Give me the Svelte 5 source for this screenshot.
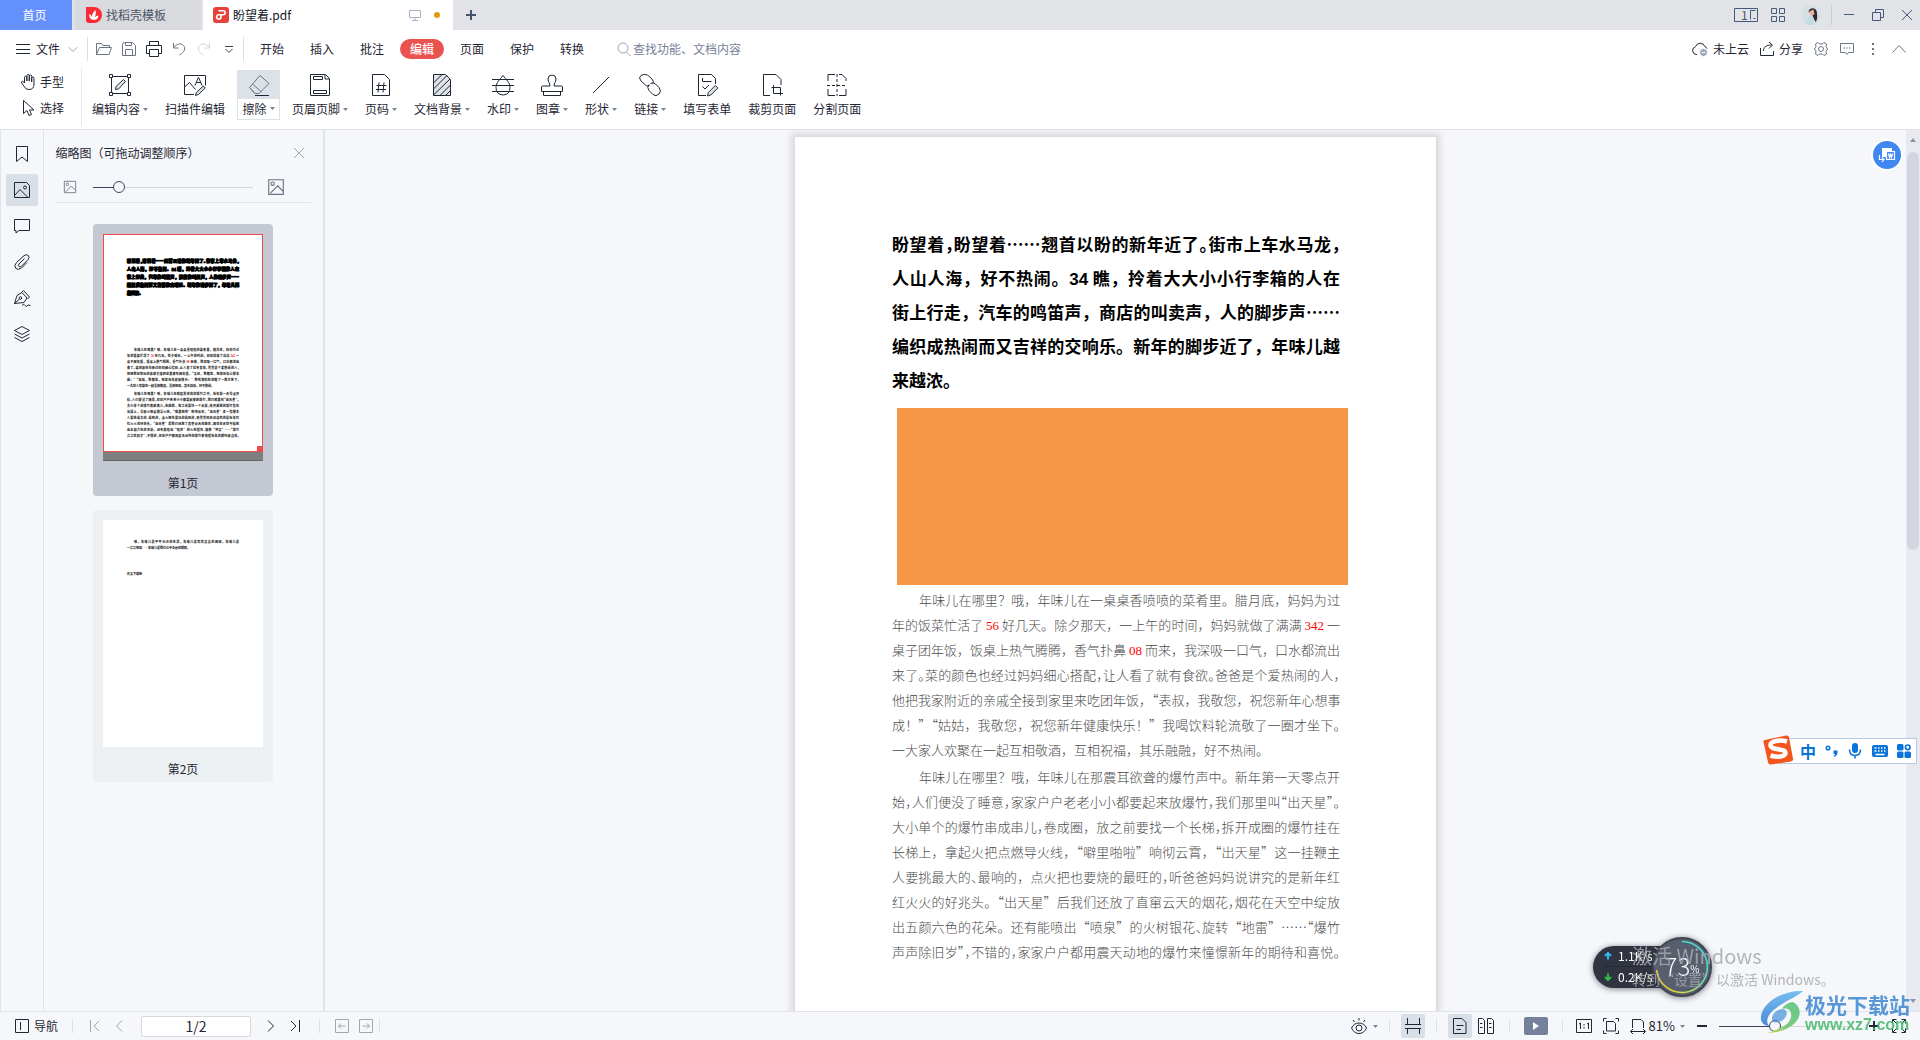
<script>
  const ink = {
    menu: { v: 16, p: [['M1 3.5h14M1 8.5h14M1 12.5h14']] },
    chevron: { v: 12, p: [['M1 4l5 5 5-5']] },
    open: { v: 18, p: [['M1.5 14.5v-11h5l1.5 2h6.5v2M1.5 14.5l3-7h12l-2.500 7z']] },
    save: { v: 16, p: [['M1.500 3.500q0-2 2-2h8l3 3v10h-13zM4.500 1.500v3h6v-3M4.500 14.500v-6h7v6']] },
    print: { v: 18, p: [['M4.5 5.500v-4h9v4M4.500 13.500h-3v-8h15v8h-3M4.500 9.500h9v7h-9z']] },
    undo: { v: 16, p: [['M2.500 2v5h5M3 6.500C5 3 10 1.500 12.500 4.500s1 6.500-4 9.500']] },
    redo: { v: 16, p: [['M13.500 2v5h-5M13 6.500C11 3 6 1.500 3.500 4.500s-1 6.500 4 9.500']] },
    more: { v: 12, p: [['M2 3.500h8'], ['M2.500 6l3.500 3.500L9.500 6']] },
    search: { v: 16, p: [['M12 7a5 5 0 1 1-10 0a5 5 0 0 1 10 0M10.500 11l4 4']] },
    cloud: { v: 18, p: [['M6 14.500H5a4 4 0 0 1-.5-7.800a5 5 0 0 1 9.500 0q1.500.5 2 2'], ['M16.500 12.500a4 4 0 1 1-8 0a4 4 0 0 1 8 0z', 'mist'], ['M10.500 12.500h4', 'light']] },
    share: { v: 16, p: [['M1.500 7v7.500h13V10M4.500 10c0-4 3-6 8-6M10 1l3.500 3-3.500 3.500']] },
    hex: { v: 16, p: [['M5 1.500l1.500 1.500h3L11 1.500l2.500 1.500-.5 2.500L14.500 8 13 10.500l.5 2.500-2.500 1.500L9.500 13h-3L5 14.500 2.500 13l.5-2.500L1.500 8 3 5.500 2.500 3z'], ['M10.500 8a2.500 2.500 0 1 1-5 0a2.500 2.500 0 0 1 5 0z']] },
    chat: { v: 16, p: [['M1.500 2.500h13v9H9.500L8 13.500l-1.500-2h-5z'], ['M4.500 7h1.500M7.200 7h1.500M10 7h1.500']] },
    dots: { v: 16, p: [['M7 2h2v2H7zM7 7h2v2H7zM7 12h2v2H7z', 'solid']] },
    up: { v: 16, p: [['M1.500 11.500l6.500-7 6.500 7']] },
    hand: { v: 18, p: [['M5.500 10V4.500q0-1.300 1.200-1.300t1.200 1.300V8V2.700q0-1.200 1.200-1.200t1.200 1.200V8V3.200q0-1.200 1.200-1.200t1.200 1.200V9V5.200q0-1.200 1.100-1.200t1.200 1.200V11q0 5.500-5 5.500-3.500 0-4.500-2.500L2.600 10q-.5-1.500.8-1.700 1-.2 2.100 1.700z']] },
    arrow: { v: 18, p: [['M4.500 1.500v13l3.500-3 2 5 2.500-1-2-4.500h4.500z']] },
    edit: { v: 24, p: [['M3.500 3.500h17v17h-17z'], ['M1.500 1.500h3v3h-3zM19.500 1.500h3v3h-3zM1.500 19.500h3v3h-3zM19.500 19.500h3v3h-3z', 'paper'], ['M7.500 16.500l.5-3 7.500-7 2 2-7 7.500z', 'shade']] },
    scan: { v: 24, p: [['M11 21.500H1.500v-19h21v10M1.500 14l5-4.500 6 7'], ['M12 12.500l3.300-8h.4l3.300 8M13.200 9.500h4.600'], ['M12.500 22.500l.8-3 7-6.500 2 2-7 6.500z', 'shade']] },
    eraser: { v: 24, p: [['M2.500 14.500L13 2.500l9 8L12 20.500H8zM5.500 11l9 8M8 20.500l-5.500-6'], ['M8 22.500h14', 'dark']] },
    header: { v: 24, p: [['M2.500 1.500h15l4 4v16.500q0 .5-.5.500H3q-.5 0-.5-.5zM17 1.500v4.500h4.500'], ['M5.500 3.500h9v3h-9zM5.500 17.500h13v3h-13z']] },
    number: { v: 24, p: [['M3.500 1.500h12l5 5v16h-17z'], ['M10 9.500l-1 10M15 9.500l-1 10M7.500 12.500h10M7 16.500h10']] },
    backdrop: { v: 24, p: [['M3.500 1.500h12l5 5v16h-17z', 'shade'], ['M3.500 10l8.500-8.500M3.500 16l13.500-13.500M4 21.500L20 6M10 22.500L20.500 12M15.500 22.500l5-5']] },
    water: { v: 24, p: [['M12 2.500c3 4 7 7 7 12q0 7-7 7.500-7-.5-7-7.500c0-5 4-8 7-12z'], ['M1 6.500h22M1 12.500h22M1 18.500h22']] },
    stamp: { v: 24, p: [['M10 13c0-3-2-4-2-7a4 4 0 0 1 8 0c0 3-2 4-2 7h7.500q1 0 1 1v4.500h-21V14q0-1 1-1zM3.500 18.500v4h17v-4']] },
    slash: { v: 24, p: [['M4 20L20 4']] },
    link: { v: 24, p: [['M11.500 12.500l-1 .5Q9 13.500 7.500 12L3 8Q0 4.500 3 2.500t6.500-.5l4.500 4q2 2 1 4.500'], ['M12.500 10.500q3-1.500 5 .5l3.500 3.500q3 3.500 0 6.500t-6 .5l-4-4q-2.500-3 0-6']] },
    form: { v: 24, p: [['M11 22.500H3.500v-21h13l4 4V11M7.500 5v3.500h9M7.500 13.500l2.500 2.500 4-4'], ['M12.500 23l.8-3.500 7-7 2.500 2.500-7 7z', 'shade']] },
    crop: { v: 24, p: [['M10 22.500H3.500v-21h12.500l5 5V12'], ['M11.500 14.500h9v8M13.500 12v8.500H23'] ] },
    split: { v: 24, p: [['M3 8V1.500h7M14 1.500h3l4 4V8M3 16v6.500h7M14 22.500h7V16'], ['M12 1v22M2 12.500h20', 'dash']] },
    bookmark: { v: 18, p: [['M3.500 1.500h11v15L9 12l-5.500 4.500z']] },
    thumbs: { v: 18, p: [['M1.500 1.500h12l3 3v12h-15zM2 14l5-5.500 8 8M13.500 6.500a1.500 1.500 0 1 1-3 0a1.500 1.500 0 0 1 3 0z']] },
    comment: { v: 18, p: [['M1.500 2.500h15v11H6l-3 2.500v-2.500H1.500z']] },
    clip: { v: 18, p: [['M11.500 5.500l-5.500 5.500q-1.200 1.800 0 2.500t2.500-.3l6.500-6.500q2-2.500.3-4.200t-4.300.2L3.500 9.500q-3 3.500-.8 5.800t5.800-.3l5.500-5.500']] },
    pen: { v: 18, p: [['M1.500 14.500L4 6.500l5-3 5 5.500-3 4.500zM8.500 3.500l2-2 6 6.500-2 2M1.500 14.500l5-4.500M8.700 9a1.300 1.300 0 1 1-2.600 0a1.300 1.300 0 0 1 2.600 0z'], ['M9 16.500q2-2.500 3 0t3-.5l2.500.5']] },
    layers: { v: 18, p: [['M9 1.500l7.500 4L9 9.500l-7.500-4zM1.500 9L9 13l7.500-4M1.500 12.500l7.500 4 7.500-4']] },
    close: { v: 12, p: [['M1 1l10 10M11 1L1 11']] },
    picture: { v: 16, p: [['M1.500 1.500h13v13h-13zM3 13.500l6.500-6.500 5 5M6.500 5a1.500 1.500 0 1 1-3 0a1.500 1.500 0 0 1 3 0z']] },
    nav: { v: 16, p: [['M1.500 1.500h13v13h-13zM6.500 4v8']] },
    first: { v: 14, p: [['M2.500 1v12M11 2L6 7l5 5']] },
    prev: { v: 14, p: [['M10 1.500L4.500 7l5.500 5.500']] },
    next: { v: 14, p: [['M4 1.500L9.500 7 4 12.500']] },
    last: { v: 14, p: [['M11.500 1v12M3 2l5 5-5 5']] },
    back: { v: 16, p: [['M1.500 1.500h13v13h-13zM4.500 8h7M7 5.500L4.500 8 7 10.500']] },
    forth: { v: 16, p: [['M1.500 1.500h13v13h-13zM4.500 8h7M9 5.500L11.500 8 9 10.500']] },
    eye: { v: 18, p: [['M1.500 11Q4 6 9 6t7.500 5Q14 16.500 9 16.500T1.500 11zM12 11a3 3 0 1 1-6 0a3 3 0 0 1 6 0zM9 1v2.500M3 3l1.500 2M15 3l-1.500 2']] },
    flow: { v: 18, p: [['M3.500 1v6.500h12V1M3.500 17v-5.500h12V17M1 7.500h16M1 11.500h16']] },
    single: { v: 18, p: [['M2.500 1.500h8.500l4 4v11h-12.500zM5.500 8.500h7M5.500 12.500h4.500']] },
    double: { v: 18, p: [['M1.500 1.500h4l2 2v13h-6zM10.500 1.500h4l2 2v13h-6zM3 6.500h2.500M3 10.500h2.500M12 6.500h2.500M12 10.500h2.500']] },
    actual: { v: 16, p: [['M.5 1.500h15v13H.5zM3 6l1.500-1v6M11 6l1.500-1v6M8 6v1.500M8 9v1.500']] },
    fit: { v: 16, p: [['M3.500 3.500h7l2 2v7.500h-9zM.5 3.500v-3h3M12.500.5h3v3M.5 12.500v3h3M12.500 15.500h3v-3']] },
    wide: { v: 16, p: [['M2.500 10V1.500h8.500l2.500 2.500v6M.5 13.500h15M3 11L.5 13.500 3 16M13 11l2.500 2.500L13 16']] },
    full: { v: 16, p: [['M1.500 5.500v-4h4M10.500 1.500h4v4M1.500 10.500v4h4M10.500 14.500h4v-4M2 2l4 4M14 2l-4 4M2 14l4-4M14 14l-4-4']] },
    minus: { v: 12, p: [['M1 6h10', 'thick']] },
    plus: { v: 12, p: [['M1 6h10M6 1v10', 'thick']] },
    dash: { v: 12, p: [['M1 5.500h10']] },
    restore: { v: 14, p: [['M1.500 4.500h8v8h-8zM4.500 4.500v-3h8v8h-3']] },
    tiles: { v: 16, p: [['M1.500 1.500h5v5h-5zM9.500 1.500h5v5h-5zM1.500 9.500h5v5h-5zM9.500 9.500h5v5h-5z']] },
    screen: { v: 14, p: [['M1.500 2.500h11v7h-11zM7 9.500v3M4 12.500h6']] }
  };

  const quick = [['open', '打开'], ['save', '保存'], ['print', '打印'], ['undo', '撤销'], ['redo', '恢复'], ['more', '更多']];
  const menus = ['开始', '插入', '批注', '编辑', '页面', '保护', '转换'];
  const tools = [
    ['edit', '编辑内容', true], ['scan', '扫描件编辑', false], ['eraser', '擦除', true], ['header', '页眉页脚', true],
    ['number', '页码', true], ['backdrop', '文档背景', true], ['water', '水印', true], ['stamp', '图章', true],
    ['slash', '形状', true], ['link', '链接', true], ['form', '填写表单', false], ['crop', '裁剪页面', false], ['split', '分割页面', false]
  ];
  const rail = [['bookmark', '书签'], ['thumbs', '缩略图'], ['comment', '批注'], ['clip', '附件'], ['pen', '签名'], ['layers', '图层']];

  // In document lines, "~" after a mark sets it half width, [n] is a highlighted number
  // and {n} a plain number in the heading face.
  const lead = [
    '盼望着，~盼望着……翘首以盼的新年近了。~街市上车水马龙，~',
    '人山人海，好不热闹。{34} 瞧，拎着大大小小行李箱的人在',
    '街上行走，汽车的鸣笛声，商店的叫卖声，人的脚步声……',
    '编织成热闹而又吉祥的交响乐。新年的脚步近了，年味儿越',
    '来越浓。'
  ];
  const body = [
    [
      '年味儿在哪里？哦，年味儿在一桌桌香喷喷的菜肴里。腊月底，妈妈为过',
      '年的饭菜忙活了 [56] 好几天。除夕那天，一上午的时间，妈妈就做了满满 [342] 一',
      '桌子团年饭，饭桌上热气腾腾，香气扑鼻 [08] 而来，我深吸一口气，口水都流出',
      '来了。~菜的颜色也经过妈妈细心搭配，~让人看了就有食欲。~爸爸是个爱热闹的人，~',
      '他把我家附近的亲戚全接到家里来吃团年饭，“~表叔，我敬您，祝您新年心想事',
      '成！”“~姑姑，我敬您，祝您新年健康快乐！”我喝饮料轮流敬了一圈才坐下。~',
      '一大家人欢聚在一起互相敬酒，互相祝福，其乐融融，好不热闹。'
    ],
    [
      '年味儿在哪里？哦，年味儿在那震耳欲聋的爆竹声中。新年第一天零点开',
      '始，~人们便没了睡意，~家家户户老老小小都要起来放爆竹，~我们那里叫“~出天星”~。~',
      '大小单个的爆竹串成串儿，~卷成圈，放之前要找一个长梯，~拆开成圈的爆竹挂在',
      '长梯上，拿起火把点燃导火线，“~噼里啪啦”响彻云霄，“~出天星”这一挂鞭主',
      '人要挑最大的、~最响的，点火把也要烧的最旺的，~听爸爸妈妈说讲究的是新年红',
      '红火火的好兆头。“~出天星”后我们还放了直窜云天的烟花，~烟花在天空中绽放',
      '出五颜六色的花朵。还有能喷出“喷泉”的火树银花、~旋转“地雷”……“~爆竹',
      '声声除旧岁”~，~不错的，~家家户户都用震天动地的爆竹来憧憬新年的期待和喜悦。~'
    ]
  ];
  const tail = ['哦，年味儿是平平淡淡的生活，年味儿是欢欢喜喜的团圆，年味儿是', '一声声祝福——年味儿是我们心中永远的期盼。'];

  const split = (line) => line.split(/(\[\d+\]|\{\d+\}|[，。、“”]~)/).filter(Boolean);

  let activeMenu = $state('编辑');
  let activeRail = $state('缩略图');
  let thumbSize = $state(14);
  let zoom = $state(41);
</script>

{#snippet icon(name, size)}
  <svg class="ic" width={size ?? ink[name].v} height={size ?? ink[name].v} viewBox="0 0 {ink[name].v} {ink[name].v}" aria-hidden="true">
    {#each ink[name].p as [d, kind]}<path {d} class={kind} />{/each}
  </svg>
{/snippet}

{#snippet caret()}
  <svg class="caret" width="5" height="3" viewBox="0 0 5 3" aria-hidden="true"><path d="M0 0h5L2.500 3z" /></svg>
{/snippet}

{#snippet textline(line)}
  <span class="row">{#each split(line) as s}{#if s[0] === '['}<span class="num red">{s.slice(1, -1)}</span>{:else if s[0] === '{'}<span class="sans">{s.slice(1, -1)}</span>{:else if s.endsWith('~')}<span class="half">{s[0]}</span>{:else}{s}{/if}{/each}</span>
{/snippet}

{#snippet article()}
  <p class="lead">{#each lead as l}{@render textline(l)}{/each}</p>
  <div class="block"></div>
  {#each body as para}
    <p class="para">{#each para as l}{@render textline(l)}{/each}</p>
  {/each}
{/snippet}

{#snippet miniature()}
  <span class="lead">{#each lead as l}{@render textline(l)}{/each}</span>
  {#each body as para}
    <span class="para">{#each para as l}{@render textline(l)}{/each}</span>
  {/each}
{/snippet}

<div class="app" lang="zh-CN">
  <header class="tabs">
    <button class="home">首页</button>
    <button class="tab">
      <svg width="16" height="16" viewBox="0 0 16 16" aria-hidden="true"><path d="M0 0h8a8 8 0 0 1 0 16H3a3 3 0 0 1-3-3z" fill="#fb2b36" /><path d="M7 13C5 10 6 6 9.500 3c.8 4 0 7-2.500 10zM6.500 13C4 12 3 10 3.200 7c2.300 1 3.300 3 3.300 6zM7.500 13c.5-2.500 2-4 5-4.500-.3 3-2 4.500-5 4.500z" fill="#fff" /></svg>
      找稻壳模板
    </button>
    <button class="tab current">
      <svg width="16" height="16" viewBox="0 0 16 16" aria-hidden="true"><rect width="16" height="16" rx="3" fill="#e8403a" /><path d="M5.500 3.800h4.700a1.900 1.900 0 0 1 0 3.900H5.800a2.200 2.200 0 1 0 2.200 2.300V7.700" fill="none" stroke="#fff" stroke-width="1.600" /></svg>
      <span class="grow">盼望着.pdf</span>
      <span class="pale">{@render icon('screen')}</span>
      <i class="unsaved"></i>
    </button>
    <button class="add" aria-label="新建标签">{@render icon('plus')}</button>
    <div class="window">
      <button class="pages" aria-label="窗口"><svg width="24" height="14" viewBox="0 0 24 14" aria-hidden="true"><path d="M.5.5h23v13H.5zM16.500 2.500v9M16.500 2.500h5M19.500 10.500h2" /></svg><span>1</span></button>
      <button aria-label="应用">{@render icon('tiles')}</button>
      <button aria-label="账号">
        <svg width="20" height="20" viewBox="0 0 20 20" aria-hidden="true"><circle cx="10" cy="10" r="10" fill="#d3e1e5" /><path d="M7.500 6.500c1.500-5 8.500-4 8.500 1.500 0 3 1 6-1.500 9l-3-6z" fill="#34262b" /><path d="M8 6.500l4.500-2 1 4.500-3 2.500z" fill="#e3b4a3" /><path d="M4.500 19l3.500-8 4 .5 1 8q-4 1-8.500-.5z" fill="#c3dbe4" /></svg>
      </button>
      <i class="sep"></i>
      <button aria-label="最小化">{@render icon('dash')}</button>
      <button aria-label="还原">{@render icon('restore')}</button>
      <button aria-label="关闭">{@render icon('close')}</button>
    </div>
  </header>

  <nav class="menubar">
    <button class="file">{@render icon('menu')}<span>文件</span><span class="tick">{@render icon('chevron', 10)}</span></button>
    <div class="quick">
      {#each quick as [name, label]}<button class={name} aria-label={label}>{@render icon(name)}</button>{/each}
    </div>
    <div class="menus">
      {#each menus as m}<button class:on={m === activeMenu} onclick={() => (activeMenu = m)}>{m}</button>{/each}
    </div>
    <label class="search">{@render icon('search')}<input type="text" placeholder="查找功能、文档内容" aria-label="查找功能" /></label>
    <div class="account">
      <button>{@render icon('cloud')}未上云</button>
      <button>{@render icon('share')}分享</button>
      <button class="grey" aria-label="设置">{@render icon('hex')}</button>
      <button class="grey" aria-label="反馈">{@render icon('chat')}</button>
      <button class="grey" aria-label="更多">{@render icon('dots')}</button>
      <button class="grey" aria-label="收起">{@render icon('up')}</button>
    </div>
  </nav>

  <div class="ribbon">
    <div class="modes">
      <button>{@render icon('hand')}手型</button>
      <button>{@render icon('arrow')}选择</button>
    </div>
    {#each tools as [name, label, drop]}
      <button class="tool {name}">
        <span class="glyph">{@render icon(name)}</span>
        <span class="label">{label}{#if drop}{@render caret()}{/if}</span>
      </button>
    {/each}
  </div>

  <main>
    <aside class="rail">
      {#each rail as [name, label]}
        <button class:on={label === activeRail} aria-label={label} onclick={() => (activeRail = label)}>{@render icon(name)}</button>
      {/each}
    </aside>

    <section class="panel">
      <div class="title"><span>缩略图（可拖动调整顺序）</span><button aria-label="关闭面板">{@render icon('close')}</button></div>
      <div class="size">
        {@render icon('picture', 14)}
        <input type="range" aria-label="缩略图大小" bind:value={thumbSize} style="--fill:{thumbSize + 2}%" />
        {@render icon('picture', 18)}
      </div>
      <button class="thumb on">
        <span class="sheet mini">
          <span class="scroll">{@render miniature()}</span>
        </span>
        <span>第1页</span>
      </button>
      <button class="thumb">
        <span class="sheet mini second">
          <span class="para">{#each tail as l}{@render textline(l)}{/each}</span>
          <b>作文下载网</b>
        </span>
        <span>第2页</span>
      </button>
    </section>

    <section class="viewer">
      <article class="page">{@render article()}</article>
      <button class="convert" aria-label="转换为文档">
        <svg width="18" height="16" viewBox="0 0 18 16" aria-hidden="true"><path d="M4 1h10v3H8v6H4z" fill="#fff" /><path d="M8.500 4.500h8v8h-8zM10.500 6.500l1 4 1-3 1 3 1-4M1.500 8v4.500h4M4 10l2 2.500L4 15" fill="none" stroke="#fff" stroke-width="1.200" /></svg>
      </button>
    </section>
    <div class="scrollbar"><svg width="6" height="4" viewBox="0 0 6 4" aria-hidden="true"><path d="M3 0l3 4H0z" /></svg><i></i><svg class="down" width="6" height="4" viewBox="0 0 6 4" aria-hidden="true"><path d="M0 0h6L3 4z" /></svg></div>
  </main>

  <footer>
    <button class="navi">{@render icon('nav')}导航</button>
    <i class="sep"></i>
    <div class="pager">
      <button class="off" aria-label="首页">{@render icon('first')}</button>
      <button class="off" aria-label="上一页">{@render icon('prev')}</button>
      <input type="text" aria-label="页码" value="1/2" />
      <button aria-label="下一页">{@render icon('next')}</button>
      <button aria-label="末页">{@render icon('last')}</button>
    </div>
    <i class="sep"></i>
    <div class="history">
      <button class="off" aria-label="后退">{@render icon('back')}</button>
      <button class="off" aria-label="前进">{@render icon('forth')}</button>
    </div>
    <i class="sep"></i>
    <div class="views">
      <button class="eye" aria-label="护眼">{@render icon('eye')}{@render caret()}</button>
      <i class="sep"></i>
      <button class="on" aria-label="连续">{@render icon('flow')}</button>
      <i class="sep"></i>
      <span class="pair">
        <button class="on" aria-label="单页">{@render icon('single')}</button>
        <button aria-label="双页">{@render icon('double')}</button>
      </span>
      <i class="sep"></i>
      <button class="play" aria-label="播放"><svg width="8" height="10" viewBox="0 0 8 10" aria-hidden="true"><path d="M1 1l6 4-6 4z" fill="#fff" /></svg></button>
      <i class="sep"></i>
    </div>
    <div class="zoom">
      <button aria-label="实际大小">{@render icon('actual')}</button>
      <button aria-label="适合页面">{@render icon('fit')}</button>
      <button aria-label="适合宽度">{@render icon('wide')}</button>
      <button class="ratio">81%{@render caret()}</button>
      <button aria-label="缩小">{@render icon('minus')}</button>
      <input type="range" aria-label="缩放" bind:value={zoom} style="--fill:{zoom}%" />
      <button aria-label="放大">{@render icon('plus')}</button>
      <button aria-label="全屏">{@render icon('full')}</button>
    </div>
  </footer>

  <div class="ime">
    <svg class="sogou" width="32" height="32" viewBox="0 0 32 32" aria-hidden="true"><path d="M3 6Q1 6 1.500 8L6 28q.5 3 3 2.500l20-3q2.500-.5 2-3L27 3.500Q26.500 1 24 1.500z" fill="#f4551c" /><path d="M25 7.500C18 5.500 8 7 8.500 11.500c.5 5 15 2.500 15 7.500 0 4-9 4.500-15 2.500" fill="none" stroke="#fff" stroke-width="4.500" /></svg>
    <button>中</button>
    <button aria-label="标点"><svg width="14" height="14" viewBox="0 0 14 14" aria-hidden="true"><circle cx="3" cy="4" r="1.800" fill="none" stroke="#0a74d8" stroke-width="1.500" /><path d="M8.500 6.500h4c.5 3-.5 5-3 6.500l-.7-1q1.200-1 1.200-2H8.500z" /></svg></button>
    <button aria-label="语音"><svg width="14" height="16" viewBox="0 0 14 16" aria-hidden="true"><rect x="4" width="6" height="10" rx="3" /><path d="M1.500 6.500q0 6 5.500 6t5.500-6M7 12v3.500" fill="none" stroke="#0a74d8" stroke-width="1.600" /></svg></button>
    <button aria-label="键盘"><svg width="16" height="14" viewBox="0 0 16 14" aria-hidden="true"><rect y="1" width="16" height="12" rx="2" /><path d="M2.500 4h2M6 4h1.500M9 4h1.500M12 4h1.500M2.500 7h2M6 7h1.500M9 7h1.500M12 7h1.500M3.500 10.500h9" stroke="#fff" stroke-width="1.600" /></svg></button>
    <button aria-label="工具箱"><svg width="14" height="14" viewBox="0 0 14 14" aria-hidden="true"><rect y="0" width="6.500" height="6.500" rx="1.500" /><rect x="0" y="7.500" width="6.500" height="6.500" rx="1.500" /><rect x="7.500" y="7.500" width="6.500" height="6.500" rx="1.500" /><circle cx="10.700" cy="3.300" r="2.300" fill="none" stroke="#0a74d8" stroke-width="1.700" /></svg></button>
  </div>

  <div class="meter">
    <div class="rates">
      <span><svg width="8" height="8" viewBox="0 0 8 8" aria-hidden="true"><path d="M4 7.500V1M1 4l3-3 3 3" stroke="#35b4f0" /></svg>1.1K/s</span>
      <span><svg width="8" height="8" viewBox="0 0 8 8" aria-hidden="true"><path d="M4 .5V7M1 4l3 3 3-3" stroke="#2fbf3f" /></svg>0.2K/s</span>
    </div>
    <div class="dial">
      <svg width="60" height="60" viewBox="0 0 60 60" aria-hidden="true">
        <defs><linearGradient id="arc" x1="1" y1="0" x2="0" y2="1"><stop offset="0" stop-color="#35d3f0" /><stop offset=".45" stop-color="#6fe0a0" /><stop offset=".75" stop-color="#d8dc4a" /><stop offset="1" stop-color="#f5a93a" /></linearGradient></defs>
        <circle cx="30" cy="30" r="29" fill="#575e6e" stroke="#3f4553" stroke-width="2" />
        <path d="M30 4.500A25.500 25.500 0 1 1 4.600 33" fill="none" stroke="url(#arc)" stroke-width="1.600" />
      </svg>
      <span><b>73</b>%</span>
    </div>
  </div>

  <div class="activate"><strong>激活 Windows</strong><span>转到“设置”以激活 Windows。</span></div>

  <a class="site" href="#top">
    <svg width="46" height="44" viewBox="0 0 46 44" aria-hidden="true">
      <defs><linearGradient id="wing" x1="0" y1="0" x2="0" y2="1"><stop offset="0" stop-color="#5fb4f0" /><stop offset="1" stop-color="#2b78cf" /></linearGradient><linearGradient id="leaf" x1="1" y1="0" x2="0" y2="1"><stop offset="0" stop-color="#4cc07c" /><stop offset=".6" stop-color="#68c46a" /><stop offset="1" stop-color="#e6e04a" /></linearGradient></defs>
      <path d="M44 1C24 0 4 12 2 26c-1 6 3 10 8 10-4-5-1-12 6-17C24 12 36 8 44 1z" fill="url(#wing)" />
      <path d="M34 12c8 4 9 14 2 21-7 7-18 10-28 10 10-3 20-7 23-13 3-7 0-13-8-11 2-4 7-7 11-7z" fill="url(#leaf)" />
      <path d="M14 32c-3-5 1-12 9-13 6 0 6 6 2 10-3 3-7 4-11 3z" fill="#3f8fd8" opacity=".8" />
    </svg>
    <span class="names"><strong>极光下载站</strong><em>www.xz7.com</em></span>
  </a>
</div>

<style>
  :global(body) { margin: 0; }
  .app { height: 100vh; display: flex; flex-direction: column; position: relative; overflow: hidden; background: #f6f7fa; color: #1f2735; font: 12px/18px "Noto Sans CJK SC", "Noto Sans", sans-serif; }
  .app *, .app *::before { box-sizing: border-box; }
  button { font: inherit; color: inherit; background: none; border: 0; padding: 0; display: flex; align-items: center; justify-content: center; white-space: nowrap; }
  input { font: inherit; color: inherit; }
  svg { flex: none; display: block; }
  .ic path { fill: none; stroke: currentColor; stroke-width: 1; }
  .ic path.solid { fill: currentColor; stroke: none; }
  .ic path.paper { fill: #fff; }
  .ic path.shade { fill: #dfe3e8; }
  .ic path.thick { stroke-width: 2; }
  .ic path.dark { stroke: #1f2735; }
  .ic path.dash { stroke-dasharray: 3 2; }
  .ic path.mist { fill: #9aa5b9; stroke: #fff; }
  .ic path.light { stroke: #fff; }
  .caret path { fill: #76829b; }
  .sep { width: 1px; background: #dcdfe5; flex: none; }
  .pale { color: #a9b2c4; }
  .grow { flex: 1; text-align: left; }

  .tabs { display: flex; height: 30px; flex: none; background: #e2e3e7; }
  .home { width: 72px; background: #6490fc; color: #fff; margin-right: 3px; padding-right: 3px; }
  .tab { width: 126px; margin-right: 2px; background: #d9dade; color: #4b5568; justify-content: flex-start; gap: 4px; padding-left: 11px; }
  .tab.current { width: 250px; background: #fff; color: #10151f; margin: 0; padding: 0 13px 0 10px; }
  .unsaved { width: 6px; height: 6px; border-radius: 50%; background: #e39a0b; margin-left: 8px; }
  .add { width: 36px; color: #46536c; }
  .window { margin-left: auto; display: flex; align-items: center; gap: 15px; padding-right: 6px; color: #46587c; }
  .window .sep { height: 20px; background: #c8ccd4; margin: 0 -5px; }
  .window button { min-width: 14px; }
  .window button:first-child { margin-right: -3px; }
  .pages { position: relative; }
  .pages path { fill: none; stroke: currentColor; }
  .pages span { position: absolute; left: 7px; }

  .menubar { display: flex; align-items: center; height: 38px; flex: none; background: #fff; }
  .file { padding: 0 9px 0 15px; height: 24px; border-right: 1px solid #dcdfe5; gap: 5px; }
  .tick { color: #8c94a3; margin-left: 3px; }
  .quick { display: flex; align-items: center; gap: 7px; height: 24px; padding: 0 5px 0 7px; border-right: 1px solid #dcdfe5; color: #6b7385; }
  .quick button { width: 18px; }
  .quick .print { color: #1f2735; }
  .quick .redo { color: #cfd3da; }
  .quick .more { color: #3b4557; }
  .menus { display: flex; gap: 6px; padding-left: 6px; }
  .menus button { width: 44px; height: 20px; border-radius: 10px; }
  .menus .on { background: #eb5350; color: #fff; font-weight: 500; }
  .search { display: flex; align-items: center; gap: 1px; margin-left: 22px; color: #9aa3b8; }
  .search input { width: 160px; border: 0; padding: 0; outline: 0; background: none; }
  .search input::placeholder { color: #77819a; opacity: 1; }
  .account { display: flex; align-items: center; gap: 10px; margin-left: auto; padding-right: 13px; }
  .account button { gap: 4px; }
  .account .grey { color: #6d7587; }

  .ribbon { display: flex; gap: 7px; align-items: flex-start; height: 62px; flex: none; background: #fff; border-bottom: 1px solid #dfe1e6; }
  .modes { height: 58px; width: 82px; padding: 1px 0 0 19px; margin-right: -2px; border-right: 1px solid #e6e8ec; display: flex; flex-direction: column; }
  .modes button { justify-content: flex-start; gap: 3px; height: 26px; }
  .tool { flex-direction: column; margin-top: 2px; height: 50px; padding: 0 5px; }
  .glyph { height: 29px; display: flex; align-items: center; }
  .label { height: 20px; display: flex; align-items: center; gap: 3px; padding-bottom: 1px; }
  .eraser { width: 43px; background: #dde2e8; padding: 0 1px 1px; color: #6d7587; }
  .eraser .label { width: 100%; background: #fff; color: #1f2735; justify-content: center; }

  main { flex: 1; min-height: 0; display: flex; }
  .rail { width: 44px; flex: none; border: solid #e1e3ea; border-width: 0 1px; padding: 8px 5px 0; display: flex; flex-direction: column; gap: 4px; }
  .rail button { width: 32px; height: 32px; border-radius: 2px; flex: none; }
  .rail .on { background: #d9dfe7; }
  .panel { width: 281px; flex: none; border-right: 2px solid #e1e3ea; padding-right: 1px; display: flex; flex-direction: column; align-items: center; overflow: hidden; }
  .title { width: 255px; height: 45px; flex: none; display: flex; align-items: center; justify-content: space-between; padding-right: 6px; }
  .title button { color: #a2a7b1; }
  .size { width: 255px; height: 28px; flex: none; display: flex; align-items: center; padding: 0 26px 3px 7px; color: #6b7385; border-bottom: 1px solid #e0e3e8; }
  .size input { flex: 1; min-width: 0; margin: 0 14px 0 16px; }
  input[type="range"] { appearance: none; height: 12px; background: linear-gradient(90deg, #3a455c var(--fill), #d3d7dd var(--fill)) center / 100% 1px no-repeat; }
  input[type="range"]::-webkit-slider-thumb { appearance: none; width: 12px; height: 12px; border-radius: 50%; border: 1px solid #3a455c; background: #f6f7fa; }
  .thumb { width: 180px; height: 272px; flex: none; margin-top: 14px; border-radius: 4px; background: #edf0f3; padding: 10px 10px 0; flex-direction: column; justify-content: flex-start; gap: 13px; }
  .size + .thumb { margin-top: 21px; }
  .thumb.on { background: #c4c8d3; }
  .sheet { width: 160px; height: 227px; background: #fff; display: block; }
  .thumb.on .sheet { background: #7f7f7f; border-bottom: 1px solid #666; }
  .scroll { display: block; height: 218px; background: linear-gradient(#ef4b4b, #ef4b4b) right bottom / 5px 5px no-repeat #fff; border: 1px solid #ef4b4b; padding: 22px 23px 0; }
  .mini .row { line-height: 6px; font-size: 3px; font-weight: 900; color: #333; }
  .mini .lead { display: flex; flex-direction: column; }
  .mini .lead .row { font-size: 4px; line-height: 8px; color: #000; -webkit-text-stroke: 1px #000; }
  .mini .para { display: block; }
  .mini .lead + .para { margin-top: 50px; }
  .mini .para + .para { margin-top: 2px; }
  .mini .para .row:first-child { padding-left: 7px; }
  .mini.second { padding: 19px 24px; text-align: left; }
  .mini b { display: block; font-size: 3px; line-height: 6px; margin-top: 20px; color: #000; }

  .viewer { flex: 1; min-width: 0; position: relative; overflow: hidden; display: flex; justify-content: center; align-items: flex-start; padding-top: 7px; }
  .page { width: 641px; height: 907px; flex: none; background: #fff; padding: 90px 96px 0 97px; box-shadow: 0 0 6px 4px #d9dadc; }
  p { margin: 0; }
  .row { display: block; white-space: nowrap; text-align: justify; text-align-last: justify; text-spacing-trim: space-all; }
  .lead .row:nth-child(5), .para .row:nth-child(7):last-child, .second .row:last-child { text-align-last: left; }
  .half { font-feature-settings: "halt"; }
  .num { font-family: "Liberation Serif", serif; line-height: 1; }
  .sans { font-family: "Liberation Sans", sans-serif; line-height: 1; }
  .red { color: #f00; }
  .page .lead { font-size: 17px; line-height: 34px; font-weight: 700; color: #000; }
  .block { height: 177px; margin: 11px -8px 2px 5px; background: #f79646; }
  .page .para { font-size: 13px; line-height: 25px; color: #4c4c4c; margin-bottom: 2px; font-weight: 300; }
  .page .para .row:first-child { padding-left: 27px; }
  .convert { position: absolute; right: 3px; top: 9px; width: 32px; height: 32px; border-radius: 50%; background: #4187f2; border: 2px solid #fff; }
  .scrollbar { width: 14px; flex: none; background: #e9eaef; display: flex; flex-direction: column; align-items: center; gap: 10px; padding: 8px 1px; }
  .scrollbar path { fill: #8b93a8; }
  .scrollbar i { width: 12px; height: 46%; border-radius: 6px; background: #d2d6e0; }
  .down { margin-top: auto; }

  footer { height: 29px; flex: none; display: flex; align-items: center; border-top: 1px solid #e1e3e8; background: #f6f7fa; }
  footer .sep { height: 14px; }
  .navi { padding: 0 14px; gap: 4px; }
  .pager { display: flex; align-items: center; padding: 0 17px 0 15px; gap: 10px; }
  .pager input { width: 110px; height: 21px; margin: 0 3px 0 5px; border: 1px solid #d6d8dc; border-radius: 2px; background: #fff; text-align: center; font-size: 14px; padding: 0; }
  .off { color: #a4a6ab; }
  .history { display: flex; gap: 8px; padding: 0 5px 0 14px; }
  .views { margin-left: auto; display: flex; align-items: center; gap: 11px; }
  .views button { width: 24px; height: 24px; border-radius: 2px; }
  .views .on { background: #d9dfe7; }
  .views .eye { width: auto; gap: 5px; }
  .pair { display: flex; gap: 2px; }
  .views .play { background: #75809b; height: 18px; margin: 0 3px; }
  .zoom { display: flex; align-items: center; gap: 11px; padding: 0 13px; }
  .zoom .ratio { gap: 5px; margin-left: -8px; font-size: 13px; }
  .zoom input { width: 134px; margin: 0 4px 0 0; }

  .ime { position: absolute; right: 3px; bottom: 276px; width: 138px; height: 26px; background: #fff; border: 1px solid #b5cbe8; display: flex; align-items: center; justify-content: space-between; padding: 0 5px 0 20px; color: #0a74d8; font-size: 16px; font-weight: 700; }
  .ime button path, .ime button rect { fill: #0a74d8; }
  .ime .sogou { position: absolute; left: -18px; top: -5px; }
  .ime button svg path[fill="none"] { fill: none; }

  .meter { position: absolute; right: 208px; bottom: 43px; display: flex; align-items: center; color: #fff; filter: drop-shadow(0 1px 3px #777b86); }
  .rates { width: 90px; height: 42px; border-radius: 21px 0 0 21px; background: #2f3440; margin-right: -31px; padding-left: 11px; }
  .rates span { display: flex; align-items: center; gap: 6px; height: 20px; font-size: 12px; }
  .rates span + span { border-top: 1px solid #262a34; height: 21px; }
  .rates path { fill: none; stroke-width: 2; }
  .dial { position: relative; }
  .dial span { position: absolute; inset: 0; display: flex; align-items: center; justify-content: center; font-size: 10px; padding-top: 4px; }
  .dial b { font-size: 24px; font-weight: 300; margin-top: -6px; }
  .activate { position: absolute; right: 92px; bottom: 51px; width: 196px; color: #a7a9ad; opacity: .85; white-space: nowrap; }
  .activate strong { display: block; font-size: 20px; line-height: 26px; font-weight: 400; }
  .activate span { display: block; font-size: 14px; line-height: 20px; }
  .site { position: absolute; right: 10px; bottom: 6px; display: flex; align-items: flex-end; text-decoration: none; white-space: nowrap; opacity: .85; }
  .names { display: flex; flex-direction: column; }
  .names strong { font-size: 21px; line-height: 24px; color: #3c87d2; font-weight: 700; }
  .names em { font: 700 16px/18px "Liberation Sans", sans-serif; color: #45b96b; }
</style>
